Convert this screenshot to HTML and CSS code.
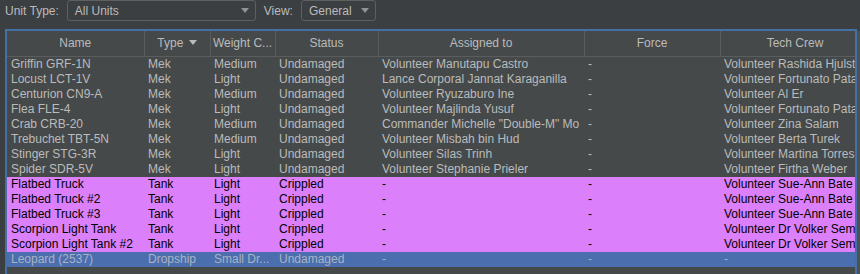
FILE: index.html
```html
<!DOCTYPE html>
<html lang="en">
<head>
  <meta charset="UTF-8" />
  <title>Units</title>
  <link rel="stylesheet" href="styles.css">
</head>
<body>
  <div class="toolbar">
    <span class="label">Unit Type:</span>
    <div class="combo combo-type"><span>All Units</span><i class="arrow"></i></div>
    <span class="label">View:</span>
    <div class="combo combo-view"><span>General</span><i class="arrow"></i></div>
  </div>

  <div class="pane-row">
    <div class="scroll-pane">
      <table class="units">
        <colgroup>
          <col style="width:137px"><col style="width:66px"><col style="width:65px"><col style="width:103px">
          <col style="width:206px"><col style="width:136px"><col style="width:150px">
        </colgroup>
        <thead>
          <tr>
            <th>Name</th>
            <th>Type <i class="sort"></i></th>
            <th>Weight C...</th>
            <th>Status</th>
            <th>Assigned to</th>
            <th>Force</th>
            <th>Tech Crew</th>
          </tr>
        </thead>
        <tbody>
          <tr><td>Griffin GRF-1N</td><td>Mek</td><td>Medium</td><td>Undamaged</td><td>Volunteer Manutapu Castro</td><td>-</td><td>Volunteer Rashida Hjulstad</td></tr>
          <tr><td>Locust LCT-1V</td><td>Mek</td><td>Light</td><td>Undamaged</td><td>Lance Corporal Jannat Karaganilla</td><td>-</td><td>Volunteer Fortunato Patane</td></tr>
          <tr><td>Centurion CN9-A</td><td>Mek</td><td>Medium</td><td>Undamaged</td><td>Volunteer Ryuzaburo Ine</td><td>-</td><td>Volunteer Al Er</td></tr>
          <tr><td>Flea FLE-4</td><td>Mek</td><td>Light</td><td>Undamaged</td><td>Volunteer Majlinda Yusuf</td><td>-</td><td>Volunteer Fortunato Patane</td></tr>
          <tr><td>Crab CRB-20</td><td>Mek</td><td>Medium</td><td>Undamaged</td><td>Commander Michelle "Double-M" Mo</td><td>-</td><td>Volunteer Zina Salam</td></tr>
          <tr><td>Trebuchet TBT-5N</td><td>Mek</td><td>Medium</td><td>Undamaged</td><td>Volunteer Misbah bin Hud</td><td>-</td><td>Volunteer Berta Turek</td></tr>
          <tr><td>Stinger STG-3R</td><td>Mek</td><td>Light</td><td>Undamaged</td><td>Volunteer Silas Trinh</td><td>-</td><td>Volunteer Martina Torres</td></tr>
          <tr><td>Spider SDR-5V</td><td>Mek</td><td>Light</td><td>Undamaged</td><td>Volunteer Stephanie Prieler</td><td>-</td><td>Volunteer Firtha Weber</td></tr>
          <tr class="damaged"><td>Flatbed Truck</td><td>Tank</td><td>Light</td><td>Crippled</td><td>-</td><td>-</td><td>Volunteer Sue-Ann Bate</td></tr>
          <tr class="damaged"><td>Flatbed Truck #2</td><td>Tank</td><td>Light</td><td>Crippled</td><td>-</td><td>-</td><td>Volunteer Sue-Ann Bate</td></tr>
          <tr class="damaged"><td>Flatbed Truck #3</td><td>Tank</td><td>Light</td><td>Crippled</td><td>-</td><td>-</td><td>Volunteer Sue-Ann Bate</td></tr>
          <tr class="damaged"><td>Scorpion Light Tank</td><td>Tank</td><td>Light</td><td>Crippled</td><td>-</td><td>-</td><td>Volunteer Dr Volker Semenov</td></tr>
          <tr class="damaged"><td>Scorpion Light Tank #2</td><td>Tank</td><td>Light</td><td>Crippled</td><td>-</td><td>-</td><td>Volunteer Dr Volker Semenov</td></tr>
          <tr class="selected"><td>Leopard (2537)</td><td>Dropship</td><td>Small Dr...</td><td>Undamaged</td><td>-</td><td>-</td><td>-</td></tr>
        </tbody>
      </table>
    </div>
    <div class="vscroll"></div>
  </div>
</body>
</html>
```

FILE: styles.css
```css
* {
  box-sizing: border-box;
}
body {
  margin: 0;
  background: #3c3f41;
  color: #bbbbbb;
  font-family: "Liberation Sans", Arial, sans-serif;
  font-size: 12px;
  overflow: hidden;
}

/* ツールバー */
.toolbar {
  display: flex;
  align-items: center;
  height: 21px;
  padding-left: 5px;
}
.label {
  margin-right: 8px;
}
.combo {
  display: flex;
  align-items: center;
  justify-content: space-between;
  height: 21px;
  padding: 0 6px 0 7px;
  border: 1px solid #5e6060;
  border-radius: 3px;
  background: #3c3f41;
}
.combo-type {
  width: 189px;
  margin-right: 8px;
}
.combo-view {
  width: 75px;
}
.arrow {
  width: 0;
  height: 0;
  border-left: 4px solid transparent;
  border-right: 4px solid transparent;
  border-top: 5px solid #8f9397;
}

/* テーブル */
.pane-row {
  display: flex;
  margin-top: 8px;
  padding-left: 5px;
}
.scroll-pane {
  width: 852px;
  height: 245px;
  border: 2px solid #4570a6;
  border-bottom: none;
  background: #45494a;
  overflow: hidden;
}
.vscroll {
  width: 3px;
  margin-top: 2px;
  background: #4d5154;
}
.units {
  table-layout: fixed;
  border-collapse: collapse;
  width: 863px;
}
.units th {
  height: 25px;
  padding: 0 2px;
  font-weight: normal;
  text-align: center;
  background: #45494a;
  border-right: 1px solid #5a5d5e;
  border-bottom: 1px solid #5a5d5e;
  white-space: nowrap;
  overflow: hidden;
}
.sort {
  display: inline-block;
  width: 0;
  height: 0;
  margin-left: 2px;
  vertical-align: 2px;
  border-left: 4px solid transparent;
  border-right: 4px solid transparent;
  border-top: 5px solid #bbbbbb;
}
.units td {
  height: 15px;
  line-height: 15px;
  padding: 0 0 0 4px;
  white-space: nowrap;
  overflow: hidden;
}
.units tr.damaged td {
  background: #db80fa;
  color: #000000;
}
.units tr.selected td {
  background: #4b6eaf;
  color: #a9b3c3;
}
```
